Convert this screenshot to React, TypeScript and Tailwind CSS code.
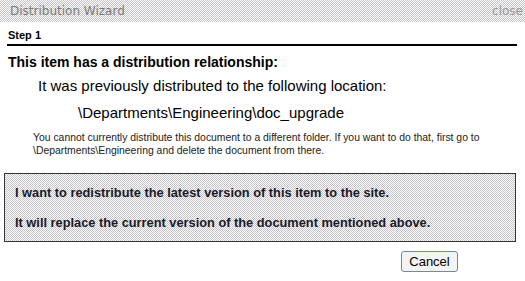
export default function App() {
  const dither =
    "bg-[conic-gradient(#c4c2c6_25%,#ffffff_0_50%,#c4c2c6_0_75%,#ffffff_0)] bg-size-[2px_2px]";
  return (
    <div className="w-[525px] h-[281px] bg-white overflow-hidden font-['Liberation_Sans',Arial,sans-serif] text-black">
      {/* Title bar */}
      <div className={`h-[22px] flex items-center justify-between pl-[10px] pr-[2px] ${dither}`}>
        <span className="font-['DejaVu_Sans',Verdana,sans-serif] text-[12px] text-[#7a7a7a]">Distribution Wizard</span>
        <span className="font-['DejaVu_Sans',Verdana,sans-serif] text-[12px] text-[#9a9a9a]">close</span>
      </div>

      {/* Step header */}
      <div className="mx-[7px] w-[510px] border-b-2 border-black pt-[7px] pb-[3px] pl-[1px] text-[11px] font-bold leading-[12px]">
        Step 1
      </div>

      {/* Body */}
      <div className="pl-[8px] pt-[8px]">
        <div className="text-[14px] font-bold leading-[16px]">This item has a distribution relationship:</div>
        <div className="pl-[30px] pt-[7px] text-[15px] leading-[18px]">
          It was previously distributed to the following location:
        </div>
        <div className="pl-[70px] pt-[9px] text-[15px] leading-[18px]">
          \Departments\Engineering\doc_upgrade
        </div>
        <div className="pl-[25px] pt-[9px] text-[10.4px] leading-[13px] text-[#222]">
          You cannot currently distribute this document to a different folder. If you want to do that, first go to
          <br />
          \Departments\Engineering and delete the document from there.
        </div>
      </div>

      {/* Redistribute box */}
      <div className={`mt-[16px] ml-[4px] w-[512px] h-[69px] border border-[#333] ${dither} flex flex-col justify-center gap-[15px] pl-[10px]`}>
        <div className="text-[12.8px] font-bold leading-[15px] text-[#1a1a2a]">
          I want to redistribute the latest version of this item to the site.
        </div>
        <div className="text-[12.8px] font-bold leading-[15px] text-[#1a1a2a]">
          It will replace the current version of the document mentioned above.
        </div>
      </div>

      {/* Buttons */}
      <div className="flex pl-[401px] pt-[9px]">
        <button className="w-[57px] h-[21px] rounded-[3px] border border-[#6a8aa8] bg-[#f4f4f4] text-[13px] leading-[15px] text-black">
          Cancel
        </button>
      </div>
    </div>
  );
}
